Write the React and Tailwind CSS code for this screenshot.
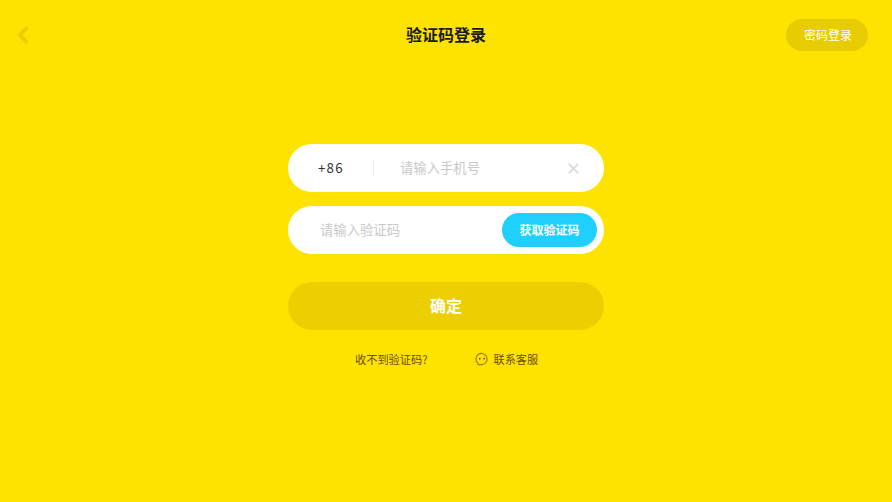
import { X } from "lucide-react";

const font = { fontFamily: '"Noto Sans CJK SC", "Noto Sans", sans-serif' };

const BackArrow = () => (
    <svg width="16" height="20" viewBox="0 0 16 20" fill="none">
        <path d="M11 3.5 L5 10 L11 16.5" stroke="#eccf00" strokeWidth="4.2" strokeLinecap="round" strokeLinejoin="round" />
    </svg>
);

const ChatIcon = () => (
    <svg width="14" height="14" viewBox="0 0 14 14" fill="none">
        <path d="M3 11.4 A5.6 5.6 0 1 1 7 12.6 L3 12.6 Z" stroke="#a87400" strokeWidth="1.1" strokeLinejoin="round" />
        <circle cx="4.8" cy="6.6" r="0.85" fill="#5c3d00" />
        <circle cx="9.2" cy="6.6" r="0.85" fill="#5c3d00" />
    </svg>
);

export default function App() {
    return (
        <div style={font} className="h-[502px] w-[892px] overflow-hidden bg-[#ffe300] flex flex-col">
            <div className="flex items-center h-[32px] mt-[19px] px-[24px]">
                <div className="flex-1 -ml-[9px] mr-[9px]"><BackArrow /></div>
                <div className="text-base font-bold text-[#1a1a1a] leading-[30px] pb-[2px]">验证码登录</div>
                <div className="flex-1 flex justify-end">
                    <button className="w-[82px] h-[32px] pl-[2px] rounded-full bg-[#e6cc00] text-white text-xs">密码登录</button>
                </div>
            </div>

            <div className="w-[316px] mx-auto mt-[93px] flex flex-col">
                <div className="h-[48px] rounded-full bg-white flex items-center pl-[30px] pr-[22px]">
                    <span className="text-[13.33px] text-[#333] w-[55px] tracking-[1.2px]">+86</span>
                    <span className="w-px h-[16px] bg-[#eeeeee]"></span>
                    <span className="text-[13.33px] text-[#c8c8c8] ml-[26px] flex-1">请输入手机号</span>
                    <X size={17} strokeWidth={2.6} color="#dcdcdc" />
                </div>

                <div className="h-[48px] rounded-full bg-white flex items-center justify-between pl-[32px] pr-[7px] mt-[14px]">
                    <span className="text-[13.33px] text-[#c8c8c8]">请输入验证码</span>
                    <button className="w-[95px] h-[34px] rounded-full bg-[#1fd0ff] text-white text-xs font-bold">获取验证码</button>
                </div>

                <button className="h-[48px] pb-[2px] rounded-full bg-[#eccf00] text-white text-base font-bold mt-[28px]">确定</button>

                <div className="flex items-center mt-[21px] pl-[67px] text-[11.2px] text-[#6b4a00] leading-[16px]">
                    <span>收不到验证码?</span>
                    <span className="ml-[48px] mr-[4px] flex"><ChatIcon /></span>
                    <span>联系客服</span>
                </div>
            </div>
        </div>
    );
}
